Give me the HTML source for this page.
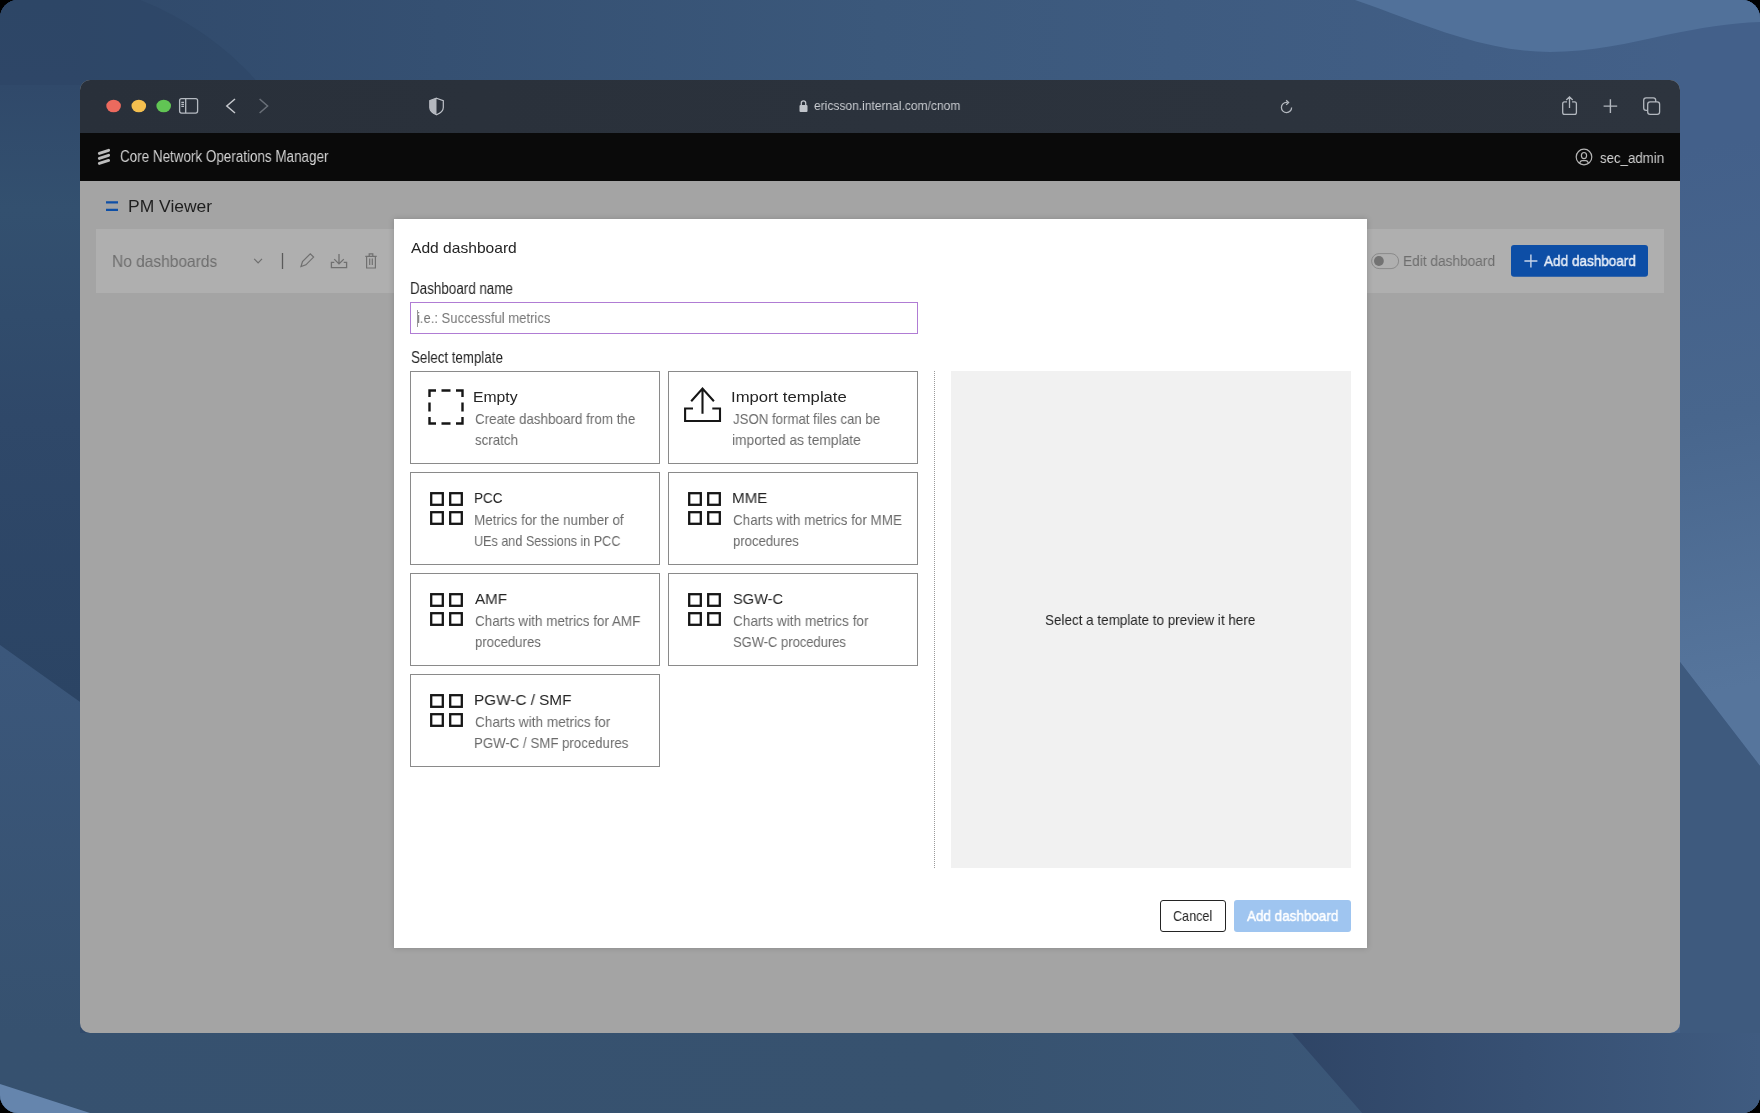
<!DOCTYPE html>
<html><head><meta charset="utf-8"><style>
html,body{margin:0;padding:0;width:1760px;height:1113px;overflow:hidden;background:#000;}
*{box-sizing:border-box;}
.t{position:absolute;white-space:pre;line-height:1;font-family:"Liberation Sans", sans-serif;transform-origin:0 0;will-change:transform;}
.abs{position:absolute;}
.ic{position:absolute;overflow:visible;}
.card{position:absolute;width:250px;height:93px;border:1px solid #8a8a8a;background:#fff;}
</style></head><body>
<div class="abs" style="left:0;top:0;width:1760px;height:1113px;border-radius:18px;overflow:hidden;background:#34506f;">
<svg width="1760" height="1113" viewBox="0 0 1760 1113" style="position:absolute;left:0;top:0">
 <defs>
  <linearGradient id="gb" x1="0" y1="0" x2="1" y2="0">
   <stop offset="0" stop-color="#2f4869"/><stop offset="0.5" stop-color="#3b587b"/><stop offset="1" stop-color="#44618a"/>
  </linearGradient>
  <linearGradient id="gr" gradientUnits="userSpaceOnUse" x1="1680" y1="150" x2="1780" y2="680">
   <stop offset="0" stop-color="#43608a"/><stop offset="0.5" stop-color="#48668d"/><stop offset="1" stop-color="#56759c"/>
  </linearGradient>
  <linearGradient id="gbot" x1="0" y1="0" x2="1" y2="0">
   <stop offset="0" stop-color="#2f4566"/><stop offset="1" stop-color="#3f5b80"/>
  </linearGradient>
  <linearGradient id="gbl" x1="0" y1="0" x2="1" y2="0">
   <stop offset="0" stop-color="#36516f"/><stop offset="0.7" stop-color="#37526f"/><stop offset="1" stop-color="#3b5778"/>
  </linearGradient>
  <linearGradient id="gls" gradientUnits="userSpaceOnUse" x1="0" y1="650" x2="0" y2="1033">
   <stop offset="0" stop-color="#3b577b"/><stop offset="1" stop-color="#36516f"/>
  </linearGradient>
  <linearGradient id="glu" gradientUnits="userSpaceOnUse" x1="0" y1="0" x2="0" y2="700">
   <stop offset="0" stop-color="#2f4869"/><stop offset="0.12" stop-color="#30496a"/><stop offset="0.3" stop-color="#33506f"/><stop offset="0.6" stop-color="#2f4869"/><stop offset="1" stop-color="#2b4464"/>
  </linearGradient>
 </defs>
 <rect width="1760" height="1113" fill="url(#gb)"/>
 <path d="M0 0H80V702L0 645Z" fill="url(#glu)"/>
 <path d="M0 0H140C190 20 230 50 260 85H0Z" fill="#2c4464" opacity="0.5"/>
 <path d="M0 645L80 702V1033H0Z" fill="url(#gls)"/>
 <path d="M0 1033H1292L1362 1113H0Z" fill="url(#gbl)"/>
 <path d="M1680 0H1760V766L1680 662Z" fill="url(#gr)"/>
 <path d="M1355 0C1385 10 1420 25 1460 37C1490 46 1520 52 1550 52C1590 52 1630 43 1666 35C1700 28 1730 23 1760 22V0Z" fill="#51719a"/>
 <path d="M1680 662L1760 766V1113H1680Z" fill="#3e5a7e"/>
 <path d="M1292 1033L1362 1113H1760V1033Z" fill="url(#gbot)"/>
 <path d="M0 1084L90 1113H0Z" fill="#6585ad"/>
</svg>
</div>

<!-- browser window -->
<div class="abs" style="left:80px;top:80px;width:1600px;height:953px;border-radius:10px;overflow:hidden;background:#a4a4a4;">
 <div class="abs" style="left:0;top:0;width:1600px;height:53px;background:linear-gradient(90deg,#29303a,#2b323c 50%,#2d343e);"></div>
 <div class="abs" style="left:0;top:53px;width:1600px;height:48px;background:#0a0a0a;"></div>
 <div class="abs" style="left:16px;top:149px;width:1568px;height:64px;background:#afafaf;"></div>
</div>

<!-- chrome icons -->
<svg class="ic" style="left:0;top:0" width="1760" height="200" viewBox="0 0 1760 200">
 <ellipse cx="113.6" cy="106" rx="7.3" ry="6.3" fill="#ec6a5e"/>
 <ellipse cx="138.8" cy="106" rx="7.3" ry="6.3" fill="#f4bf4f"/>
 <ellipse cx="163.7" cy="106" rx="7.3" ry="6.3" fill="#61c554"/>
 <g fill="none" stroke="#b5bac1" stroke-width="1.3">
  <rect x="179.6" y="98.6" width="18" height="14.5" rx="2"/>
  <path d="M185.7 98.6v14.5M181.3 102.4h2.7M181.3 104.4h2.7M181.3 106.4h2.7"/>
 </g>
 <path d="M235 99L226.8 106L235 113" fill="none" stroke="#c5c8cd" stroke-width="1.5"/>
 <path d="M259.6 99L267.6 106L259.6 113" fill="none" stroke="#6a7079" stroke-width="1.5"/>
 <path d="M436.5 98.2L443.3 100.6V107.5C443.3 111 440 113.3 436.5 114.8C433 113.3 429.8 111 429.8 107.5V100.6Z" fill="none" stroke="#c0c4cb" stroke-width="1.2"/>
 <path d="M436.5 98.2L429.8 100.6V107.5C429.8 111 433 113.3 436.5 114.8Z" fill="#b3b7be"/>
 <rect x="799.5" y="105" width="8" height="7" rx="1" fill="#c0c4ca"/>
 <path d="M801.3 105.5V103a2.2 2.2 0 0 1 4.4 0v2.5" fill="none" stroke="#c0c4ca" stroke-width="1.3"/>
 <path d="M1291.6 107.4A5.1 5.1 0 1 1 1286.5 102.4H1287.5" fill="none" stroke="#b3b8bf" stroke-width="1.3"/>
 <path d="M1286.2 100.2L1288.6 102.5L1286.2 104.9" fill="none" stroke="#b3b8bf" stroke-width="1.3"/>
 <path d="M1567 101.9H1564.6Q1562.7 101.9 1562.7 103.8V112.5Q1562.7 114.4 1564.6 114.4H1574.5Q1576.4 114.4 1576.4 112.5V103.8Q1576.4 101.9 1574.5 101.9H1572.1M1569.5 96.9V108M1566.3 100L1569.5 96.8L1572.7 100" fill="none" stroke="#b3b8bf" stroke-width="1.3"/>
 <path d="M1610.4 99.3V113M1603.6 106.1H1617.2" fill="none" stroke="#b3b8bf" stroke-width="1.4"/>
 <rect x="1643.7" y="97.9" width="12" height="12.5" rx="2.4" fill="none" stroke="#b3b8bf" stroke-width="1.3"/>
 <rect x="1647.7" y="101.9" width="11.9" height="12.5" rx="2.4" fill="#2c333d" stroke="#b3b8bf" stroke-width="1.3"/>
 <!-- ericsson logo -->
 <g stroke="#bdbdbd" stroke-width="2.9" stroke-linecap="round">
  <path d="M99.3 153.4L108.6 150.3M99.3 158.4L108.6 155.3M99.3 163.4L108.6 160.4"/>
 </g>
 <circle cx="1584" cy="157" r="7.8" fill="none" stroke="#b4b4b4" stroke-width="1.2"/>
 <ellipse cx="1584" cy="155.6" rx="2.6" ry="3.1" fill="none" stroke="#b4b4b4" stroke-width="1.2"/>
 <path d="M1579.4 163.6Q1580.4 160.6 1582 160.6H1586Q1587.6 160.6 1588.6 163.6" fill="none" stroke="#b4b4b4" stroke-width="1.2"/>
 <!-- hamburger -->
 <path d="M106 202.3H118M106 209.8H118" stroke="#0e4fa6" stroke-width="2.2"/>
</svg>

<!-- toolbar icons -->
<svg class="ic" style="left:0;top:0" width="1760" height="300" viewBox="0 0 1760 300">
 <path d="M254.2 258.8L258.1 262.8L262 258.8" fill="none" stroke="#6e6e6e" stroke-width="1.2"/>
 <path d="M282.5 253V269" stroke="#5a5a5a" stroke-width="1.3"/>
 <path d="M301 266.5L302.5 261.5L310.3 253.8L313.6 257.1L305.9 264.8Z" fill="none" stroke="#707070" stroke-width="1.2"/>
 <path d="M339 254V264M334.2 259.1L339 263.9L343.8 259.1M334.3 262.3H331.4V267.6H346.6V262.3H343.7" fill="none" stroke="#707070" stroke-width="1.3"/>
 <path d="M365.3 256.3H376.7M366.6 256.3V268H375.4V256.3M369.2 256V253.8H372.8V256M369.7 258.6V265M372.3 258.6V265" fill="none" stroke="#707070" stroke-width="1.2"/>
 <rect x="1371.6" y="253.6" width="27" height="15" rx="7.5" fill="none" stroke="#8a8a8a" stroke-width="1"/>
 <circle cx="1378.9" cy="261" r="4.9" fill="#727272"/>
 <rect x="1511" y="245" width="137" height="31.7" rx="3" fill="#0d4ea6"/>
 <path d="M1530.9 254.5V267.6M1524.4 261H1537.4" stroke="#c9d6ea" stroke-width="1.4"/>
</svg>

<!-- modal -->
<div class="abs" style="left:394px;top:219px;width:973px;height:729px;background:#fff;box-shadow:0 0 6px rgba(0,0,0,0.18);"></div>
<div class="abs" style="left:410px;top:302px;width:508px;height:32px;border:1px solid #b07cd4;"></div>
<div class="abs" style="left:417px;top:310px;width:1px;height:17px;background:#9a9a9a;"></div>
<div class="card" style="left:410px;top:371px"></div>
<div class="card" style="left:668px;top:371px"></div>
<div class="card" style="left:410px;top:472px"></div>
<div class="card" style="left:668px;top:472px"></div>
<div class="card" style="left:410px;top:573px"></div>
<div class="card" style="left:668px;top:573px"></div>
<div class="card" style="left:410px;top:674px"></div>
<svg class="ic" style="left:427px;top:388px" width="38" height="38" viewBox="0 0 38 38"><g fill="none" stroke="#161616" stroke-width="2.4"><path d="M2.5 9V2.5H9M14.5 2.5h9M29 2.5h6.5V9M35.5 14.5v9M35.5 29v6.5H29M23.5 35.5h-9M9 35.5H2.5V29M2.5 23.5v-9"/></g></svg>
<svg class="ic" style="left:675px;top:380px" width="55" height="50" viewBox="0 0 55 50"><g fill="none" stroke="#161616" stroke-width="2.1"><path d="M27.5 9V33.7M16.2 21.3L27.5 8.6L38.9 21.3M18 28.5H10.1V41H45V28.5H37.3"/></g></svg>
<svg class="ic" style="left:429.5px;top:491.5px" width="34" height="34" viewBox="0 0 34 34"><g fill="none" stroke="#161616" stroke-width="2.3"><rect x="1.2" y="1.2" width="11.6" height="11.6"/><rect x="20.2" y="1.2" width="11.6" height="11.6"/><rect x="1.2" y="20.2" width="11.6" height="11.6"/><rect x="20.2" y="20.2" width="11.6" height="11.6"/></g></svg>
<svg class="ic" style="left:687.5px;top:491.5px" width="34" height="34" viewBox="0 0 34 34"><g fill="none" stroke="#161616" stroke-width="2.3"><rect x="1.2" y="1.2" width="11.6" height="11.6"/><rect x="20.2" y="1.2" width="11.6" height="11.6"/><rect x="1.2" y="20.2" width="11.6" height="11.6"/><rect x="20.2" y="20.2" width="11.6" height="11.6"/></g></svg>
<svg class="ic" style="left:429.5px;top:592.5px" width="34" height="34" viewBox="0 0 34 34"><g fill="none" stroke="#161616" stroke-width="2.3"><rect x="1.2" y="1.2" width="11.6" height="11.6"/><rect x="20.2" y="1.2" width="11.6" height="11.6"/><rect x="1.2" y="20.2" width="11.6" height="11.6"/><rect x="20.2" y="20.2" width="11.6" height="11.6"/></g></svg>
<svg class="ic" style="left:687.5px;top:592.5px" width="34" height="34" viewBox="0 0 34 34"><g fill="none" stroke="#161616" stroke-width="2.3"><rect x="1.2" y="1.2" width="11.6" height="11.6"/><rect x="20.2" y="1.2" width="11.6" height="11.6"/><rect x="1.2" y="20.2" width="11.6" height="11.6"/><rect x="20.2" y="20.2" width="11.6" height="11.6"/></g></svg>
<svg class="ic" style="left:429.5px;top:693.5px" width="34" height="34" viewBox="0 0 34 34"><g fill="none" stroke="#161616" stroke-width="2.3"><rect x="1.2" y="1.2" width="11.6" height="11.6"/><rect x="20.2" y="1.2" width="11.6" height="11.6"/><rect x="1.2" y="20.2" width="11.6" height="11.6"/><rect x="20.2" y="20.2" width="11.6" height="11.6"/></g></svg>
<div class="abs" style="left:934px;top:371px;width:0;height:497px;border-left:1px dotted #9a9a9a;"></div>
<div class="abs" style="left:951px;top:371px;width:400px;height:497px;background:#f1f1f1;"></div>
<div class="abs" style="left:1160px;top:900px;width:66px;height:32px;border:1px solid #242424;border-radius:3px;"></div>
<div class="abs" style="left:1234px;top:900px;width:117px;height:32px;background:#9fc5f0;border-radius:3px;"></div>
<div class="t" style="left:813.70px;top:99.30px;font-size:13px;color:#c9ccd1;font-weight:400;transform:scaleX(0.9244);">ericsson.internal.com/cnom</div>
<div class="t" style="left:120.10px;top:148.76px;font-size:16px;color:#d2d2d2;font-weight:400;transform:scaleX(0.8401);">Core Network Operations Manager</div>
<div class="t" style="left:1600.00px;top:149.90px;font-size:15px;color:#d2d2d2;font-weight:400;transform:scaleX(0.8837);">sec_admin</div>
<div class="t" style="left:127.54px;top:197.73px;font-size:16.5px;color:#1e1e1e;font-weight:400;transform:scaleX(1.0585);">PM Viewer</div>
<div class="t" style="left:112.16px;top:253.13px;font-size:16.5px;color:#6e6e6e;font-weight:400;transform:scaleX(0.9398);">No dashboards</div>
<div class="t" style="left:1402.72px;top:253.08px;font-size:15.5px;color:#6e6e6e;font-weight:400;transform:scaleX(0.8826);">Edit dashboard</div>
<div class="t" style="left:1544.20px;top:253.08px;font-size:15.5px;color:#e6edf7;font-weight:400;transform:scaleX(0.8735);-webkit-text-stroke:0.45px #e6edf7;">Add dashboard</div>
<div class="t" style="left:410.60px;top:240.20px;font-size:15px;color:#242424;font-weight:400;transform:scaleX(1.0394);">Add dashboard</div>
<div class="t" style="left:409.76px;top:280.76px;font-size:16px;color:#242424;font-weight:400;transform:scaleX(0.8388);">Dashboard name</div>
<div class="t" style="left:417.33px;top:310.10px;font-size:15px;color:#767676;font-weight:400;transform:scaleX(0.8691);">i.e.: Successful metrics</div>
<div class="t" style="left:410.60px;top:350.21px;font-size:15.7px;color:#242424;font-weight:400;transform:scaleX(0.8496);">Select template</div>
<div class="t" style="left:473.49px;top:389.28px;font-size:15.5px;color:#242424;font-weight:400;transform:scaleX(1.0144);">Empty</div>
<div class="t" style="left:474.50px;top:411.10px;font-size:15px;color:#6a6a6a;font-weight:400;transform:scaleX(0.8942);">Create dashboard from the</div>
<div class="t" style="left:474.50px;top:432.20px;font-size:15px;color:#6a6a6a;font-weight:400;transform:scaleX(0.8881);">scratch</div>
<div class="t" style="left:731.43px;top:389.28px;font-size:15.5px;color:#242424;font-weight:400;transform:scaleX(1.0748);">Import template</div>
<div class="t" style="left:732.50px;top:411.10px;font-size:15px;color:#6a6a6a;font-weight:400;transform:scaleX(0.8823);">JSON format files can be</div>
<div class="t" style="left:731.58px;top:432.20px;font-size:15px;color:#6a6a6a;font-weight:400;transform:scaleX(0.9191);">imported as template</div>
<div class="t" style="left:473.63px;top:490.28px;font-size:15.5px;color:#242424;font-weight:400;transform:scaleX(0.8721);">PCC</div>
<div class="t" style="left:473.60px;top:512.10px;font-size:15px;color:#6a6a6a;font-weight:400;transform:scaleX(0.8976);">Metrics for the number of</div>
<div class="t" style="left:473.66px;top:533.20px;font-size:15px;color:#6a6a6a;font-weight:400;transform:scaleX(0.8402);">UEs and Sessions in PCC</div>
<div class="t" style="left:731.52px;top:490.28px;font-size:15.5px;color:#242424;font-weight:400;transform:scaleX(0.9764);">MME</div>
<div class="t" style="left:732.50px;top:512.10px;font-size:15px;color:#6a6a6a;font-weight:400;transform:scaleX(0.8973);">Charts with metrics for MME</div>
<div class="t" style="left:732.50px;top:533.20px;font-size:15px;color:#6a6a6a;font-weight:400;transform:scaleX(0.8760);">procedures</div>
<div class="t" style="left:474.50px;top:591.28px;font-size:15.5px;color:#242424;font-weight:400;transform:scaleX(0.9798);">AMF</div>
<div class="t" style="left:474.50px;top:613.10px;font-size:15px;color:#6a6a6a;font-weight:400;transform:scaleX(0.8980);">Charts with metrics for AMF</div>
<div class="t" style="left:474.50px;top:634.20px;font-size:15px;color:#6a6a6a;font-weight:400;transform:scaleX(0.8773);">procedures</div>
<div class="t" style="left:732.50px;top:591.28px;font-size:15.5px;color:#242424;font-weight:400;transform:scaleX(0.9413);">SGW-C</div>
<div class="t" style="left:732.50px;top:613.10px;font-size:15px;color:#6a6a6a;font-weight:400;transform:scaleX(0.9082);">Charts with metrics for</div>
<div class="t" style="left:732.50px;top:634.20px;font-size:15px;color:#6a6a6a;font-weight:400;transform:scaleX(0.8647);">SGW-C procedures</div>
<div class="t" style="left:473.51px;top:692.28px;font-size:15.5px;color:#242424;font-weight:400;transform:scaleX(0.9870);">PGW-C / SMF</div>
<div class="t" style="left:474.50px;top:714.10px;font-size:15px;color:#6a6a6a;font-weight:400;transform:scaleX(0.9068);">Charts with metrics for</div>
<div class="t" style="left:473.62px;top:735.20px;font-size:15px;color:#6a6a6a;font-weight:400;transform:scaleX(0.8830);">PGW-C / SMF procedures</div>
<div class="t" style="left:1045.10px;top:612.10px;font-size:15px;color:#242424;font-weight:400;transform:scaleX(0.8976);">Select a template to preview it here</div>
<div class="t" style="left:1173.30px;top:908.00px;font-size:15px;color:#242424;font-weight:400;transform:scaleX(0.8413);">Cancel</div>
<div class="t" style="left:1247.30px;top:908.00px;font-size:15px;color:#ffffff;font-weight:400;transform:scaleX(0.8974);-webkit-text-stroke:0.45px #ffffff;">Add dashboard</div>
</body></html>
